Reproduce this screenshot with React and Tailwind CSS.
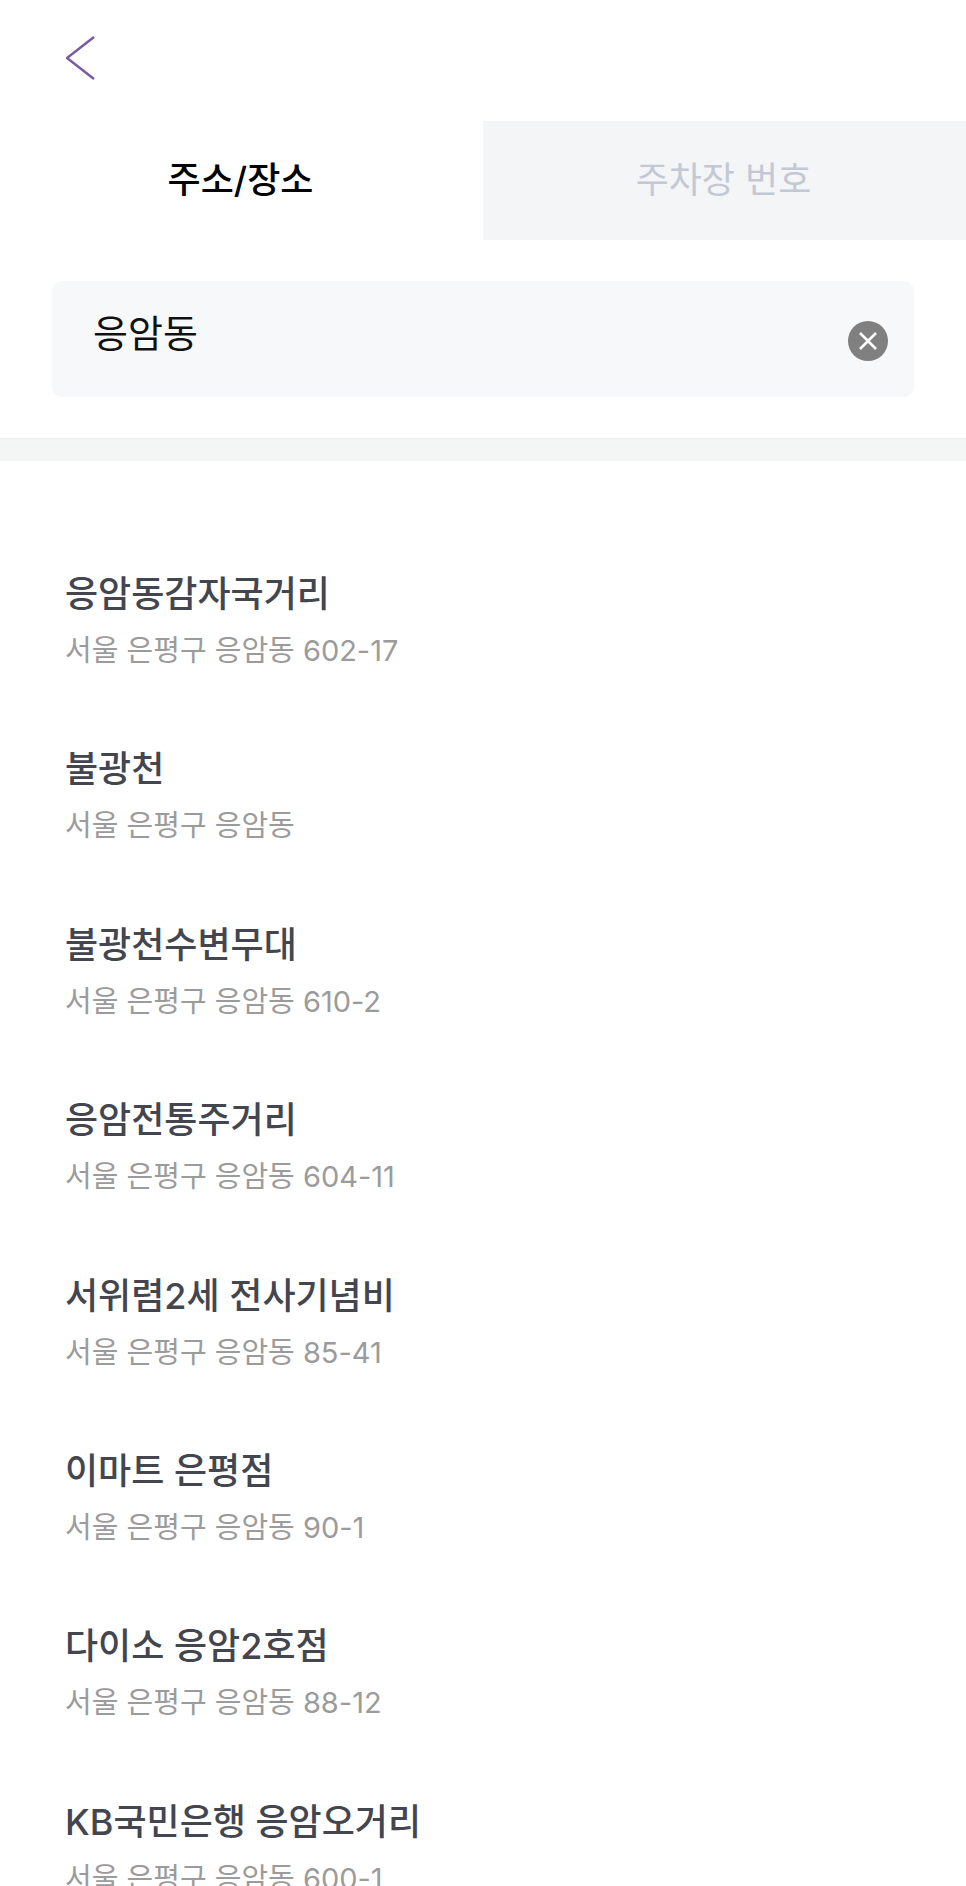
const PLACES = [
  { name: '응암동감자국거리', addr: '서울 은평구 응암동 602-17' },
  { name: '불광천', addr: '서울 은평구 응암동' },
  { name: '불광천수변무대', addr: '서울 은평구 응암동 610-2' },
  { name: '응암전통주거리', addr: '서울 은평구 응암동 604-11' },
  { name: '서위렴2세 전사기념비', addr: '서울 은평구 응암동 85-41' },
  { name: '이마트 은평점', addr: '서울 은평구 응암동 90-1' },
  { name: '다이소 응암2호점', addr: '서울 은평구 응암동 88-12' },
  { name: 'KB국민은행 응암오거리', addr: '서울 은평구 응암동 600-1' },
];

const FONT = "font-['Inter','Noto_Sans_CJK_KR',sans-serif]";

export default function App() {
  return (
    <div className={`${FONT} w-[966px] h-[1886px] overflow-hidden bg-white`}>
      <div className="h-[121px] pl-[66px] pt-9">
        <svg width="29" height="44" viewBox="0 0 29 44" fill="none" stroke="#7a5aa0" strokeWidth="2.5">
          <path d="M28 1 L1 22 L28 43" />
        </svg>
      </div>

      <div className="flex h-[119px]">
        <div className="flex-1 flex items-center justify-center text-[36px] font-medium text-black pr-[2px] pb-[1px]">주소/장소</div>
        <div className="flex-1 flex items-center justify-center text-[36px] text-[#c3c9d4] bg-[#f4f5f7] pr-[2px] pb-[1px]">주차장 번호</div>
      </div>

      <div className="px-[52px] pt-[41px] pb-[41px]">
        <div className="h-[116px] rounded-[10px] bg-[#f7f8fa] flex items-center justify-between pl-[41px] pr-[26px]">
          <span className="text-[38px] text-[#111] -mt-[12px]">응암동</span>
          <span className="w-10 h-10 rounded-full bg-[#808080] flex items-center justify-center mt-[3px]">
            <svg width="20" height="20" viewBox="0 0 20 20" stroke="white" strokeWidth="2.5">
              <path d="M2 2 L18 18 M18 2 L2 18" />
            </svg>
          </span>
        </div>
      </div>

      <div className="h-[23px] bg-[#f4f5f5] border-t border-[#ececec]" />

      <ul className="pt-[110px] pl-[65px]">
        {PLACES.map((p) => (
          <li key={p.name} className="h-[175.4px]">
            <div className="text-[36px] font-medium leading-[46px] text-[#43464e]">{p.name}</div>
            <div className="mt-[16px] text-[29px] leading-[36px] text-[#9b9b9b]">{p.addr}</div>
          </li>
        ))}
      </ul>
    </div>
  );
}
